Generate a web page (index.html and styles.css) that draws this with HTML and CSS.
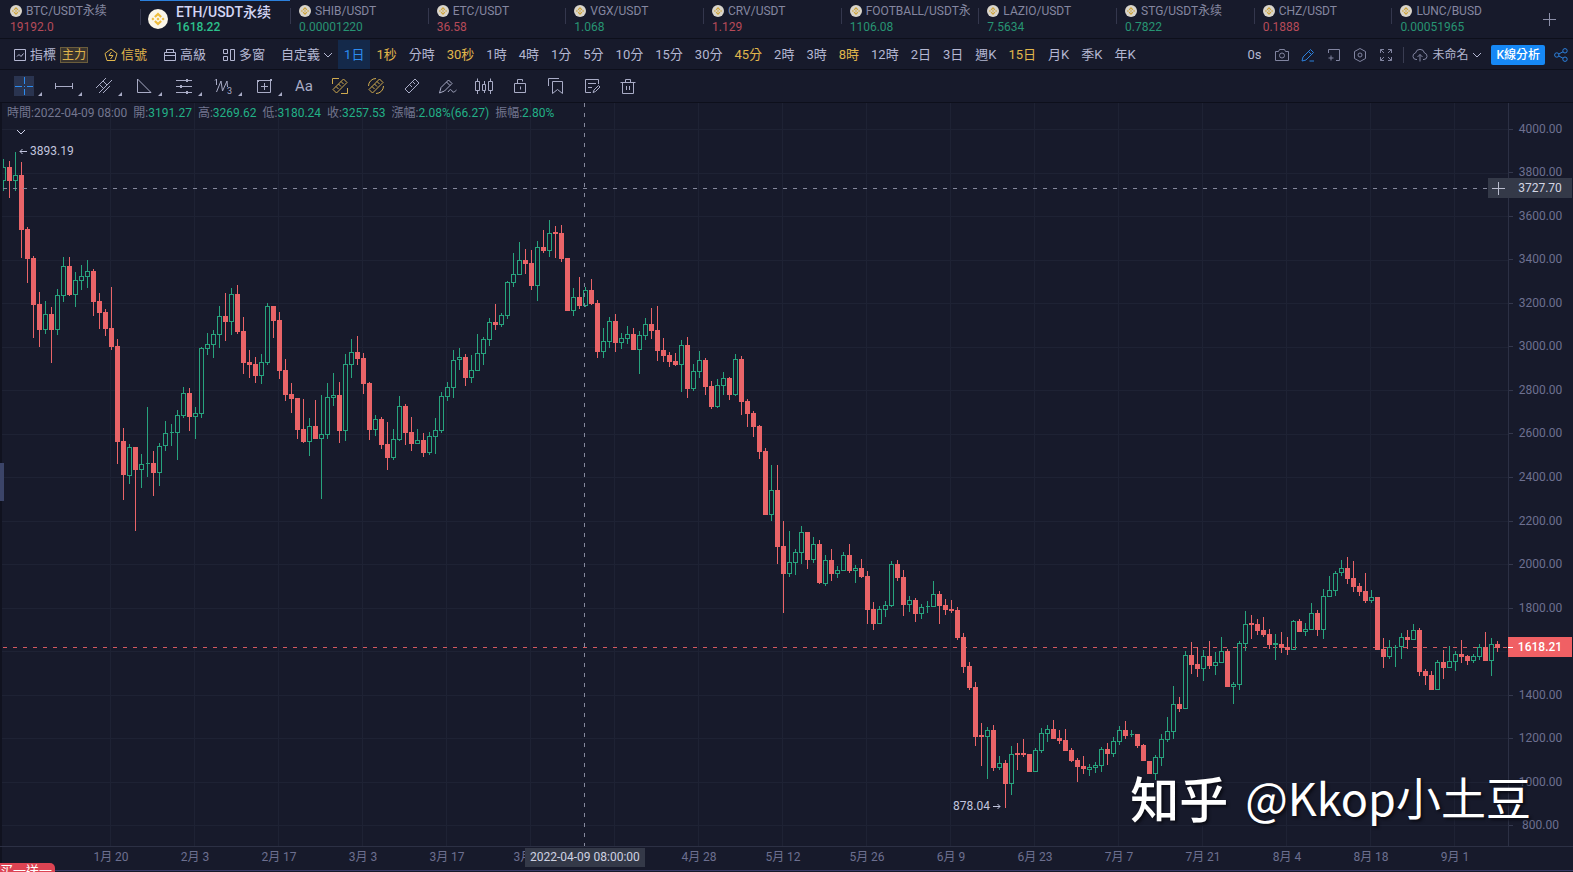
FILE: index.html
```html
<!DOCTYPE html>
<html lang="zh-Hant">
<head>
<meta charset="utf-8">
<title>ETH/USDT永续 1618.22</title>
<link rel="stylesheet" href="styles.css">
</head>
<body>
<svg class="defs" aria-hidden="true">
  <symbol id="coin" viewBox="0 0 20 20"><circle cx="10" cy="10" r="10" fill="#fbf6e8"/><g fill="#eebc3c"><path d="M10 3.4 13.9 7.3 12.4 8.8 10 6.4 7.6 8.8 6.1 7.3Z"/><path d="M10 16.6 6.1 12.7 7.6 11.2 10 13.6 12.4 11.2 13.9 12.7Z"/><path d="M10 8.5 11.5 10 10 11.5 8.500 10ZM4.900 8.500 6.400 10 4.900 11.500 3.400 10ZM15.100 8.500 16.600 10 15.100 11.500 13.600 10Z"/></g></symbol>
  <symbol id="chev" viewBox="0 0 10 6"><path d="M1 1 5 5 9 1"/></symbol>
</svg>
<div class="app">
  <nav class="tabs" id="tabs" aria-label="交易對"></nav>

  <div class="bar">
    <button class="item"><svg class="i14" viewBox="0 0 14 14"><path d="M1.500 1.500h11v11h-11zM4 8.500 6 6.500 8 8.500 10.500 5.500"/></svg>指標<span class="badge">主力</span></button>
    <button class="item gold"><svg class="i14" viewBox="0 0 14 14"><path d="M7 1 13 5.500 11 12.500H3L1 5.500ZM7.500 4 5 7.500h4L6.500 11"/></svg>信號</button>
    <button class="item"><svg class="i14" viewBox="0 0 14 14"><path d="M3.500 4.500v-3h7v3M1.500 4.500h11v8h-11zM1.500 7.500h11"/></svg>高級</button>
    <button class="item"><svg class="i14" viewBox="0 0 14 14"><path d="M1.500 1.500h4v4h-4zM1.500 8.500h4v4h-4zM8.500 1.500h4v11h-4z"/></svg>多窗</button>
    <button class="item custom">自定義<svg class="chev"><use href="#chev"/></svg></button>
    <div class="periods" id="periods"></div>
    <div class="actions">
      <span class="count">0s</span>
      <button class="ico" aria-label="截圖"><svg viewBox="0 0 14 14"><path d="M.500 3.500h3l1-2h5l1 2h3v9H.500z"/><circle cx="7" cy="7.500" r="2.500"/></svg></button>
      <button class="ico blue" aria-label="畫線"><svg viewBox="0 0 14 14"><path d="M1 13 2 9 9.500 1.500 12.500 4.500 5 12ZM7.500 3.500 10.500 6.500M8.500 13H13"/></svg></button>
      <button class="ico" aria-label="新增窗口"><svg viewBox="0 0 14 14"><path d="M1.500 5V1.500h11v11H9M4 7.500v5M1.500 10h5"/></svg></button>
      <button class="ico" aria-label="設定"><svg viewBox="0 0 14 14"><path d="M7 .500 12.500 3.500V10.500L7 13.500 1.500 10.500V3.500Z"/><circle cx="7" cy="7" r="2"/></svg></button>
      <button class="ico" aria-label="全螢幕"><svg viewBox="0 0 14 14"><path d="M1.500 5V1.500H5M1.500 1.500 5 5M9 1.500h3.500V5M12.500 1.500 9 5M1.500 9v3.500H5M1.500 12.500 5 9M9 12.500h3.500V9M12.500 12.500 9 9"/></svg></button>
      <span class="rule"></span>
      <button class="layout"><svg class="cloud" viewBox="0 0 16 14"><path d="M5 11.500H4A3.300 3.300 0 0 1 3.500 5 4.600 4.600 0 0 1 12.500 5 3.300 3.300 0 0 1 12 11.500H11M8 13.500V6.500M5.500 9 8 6.500 10.500 9"/></svg>未命名<svg class="chev"><use href="#chev"/></svg></button>
      <button class="primary">K線分析</button>
      <button class="ico blue share" aria-label="分享"><svg viewBox="0 0 14 14"><circle cx="2.800" cy="7" r="2.200"/><circle cx="11" cy="2.800" r="2.200"/><circle cx="11" cy="11.200" r="2.200"/><path d="M4.800 6 9 3.800M4.800 8 9 10.200"/></svg></button>
    </div>
  </div>

  <div class="tools">
    <button class="tool more on" aria-label="十字線"><svg viewBox="0 0 20 20"><path d="M10.500 1v7M10.500 13v6M1 10.500h7M13 10.500h6M10.500 10v1"/></svg></button>
    <button class="tool more" aria-label="線段"><svg viewBox="0 0 20 20"><path d="M1.500 7v6M18.500 7v6M1.500 10.500h17"/></svg></button>
    <button class="tool more" aria-label="平行線"><svg viewBox="0 0 20 20"><path d="M2 12 12 2M5 17 18 4M9 17 16 10M5 8 10 13M9 5 13 9"/></svg></button>
    <button class="tool more" aria-label="三角形"><svg viewBox="0 0 20 20"><path d="M3.500 3v13.500H17Z"/></svg></button>
    <button class="tool more" aria-label="斐波那契"><svg viewBox="0 0 20 20"><path d="M2 4.500h16M2 10.500h16M2 16.500h16"/><path class="fill" d="M12 3h2v3h-2zM6 9h2v3H6zM12 15h2v3h-2z"/></svg></button>
    <button class="tool more" aria-label="波浪"><svg viewBox="0 0 20 20"><path d="M1 4.500 2.500 3v6M2.500 16 7 5 8.500 15 13 5 13.500 11"/><text x="13" y="18">3</text></svg></button>
    <button class="tool more" aria-label="區間"><svg viewBox="0 0 20 20"><path d="M3.500 4.500h13v12h-13zM10.500 7v7M7 10.500h7"/><path class="fill" d="M3 4h2v2H3zM16 3h2v2h-2z"/></svg></button>
    <button class="tool aa">Aa</button>
    <button class="tool gold" aria-label="量尺"><svg viewBox="0 0 20 20"><path d="M3 13.500 13.500 3 17 6.500 6.500 17ZM6 10.500l2.500 2.500M8.500 8l2.500 2.500M11 5.500l2.500 2.500M2.500 8V2.500H9M17.500 12v5.500H11"/></svg></button>
    <button class="tool gold" aria-label="圓形量尺"><svg viewBox="0 0 20 20"><path d="M3 13.500 13.500 3 17 6.500 6.500 17ZM6 10.500l2.500 2.500M8.500 8l2.500 2.500M11 5.500l2.500 2.500M2.500 10A7.500 7.500 0 0 1 10 2.500M17.500 10A7.500 7.500 0 0 1 10 17.500"/></svg></button>
    <button class="tool" aria-label="尺"><svg viewBox="0 0 20 20"><path d="M3 13 13 3 17 7 7 17ZM8 9l2 2M11 6l2 2"/></svg></button>
    <button class="tool" aria-label="畫筆"><svg viewBox="0 0 20 20"><path d="M1.500 17 3 11.500 10.500 4 14 7.500 6.500 15ZM8.500 6l3.500 3.500M10 16c2-3 3-3 4-1s2.500 1 4.500-1"/></svg></button>
    <button class="tool" aria-label="K線"><svg viewBox="0 0 20 20"><path d="M1.500 5.500h4v9h-4zM3.500 2.500v3M3.500 14.500V18M8.500 8.500h3v6h-3zM10.500 5v3.500M10.500 14.500V17M14.500 5.500h4v9h-4zM16.500 2.500v3M16.500 14.500V18"/></svg></button>
    <button class="tool" aria-label="鎖定"><svg viewBox="0 0 20 20"><path d="M4.500 7.500h11v9h-11zM7.500 7.500v-4h5v2M10.500 10.500v3"/></svg></button>
    <button class="tool" aria-label="收藏"><svg viewBox="0 0 20 20"><path d="M2.500 10V2.500H13M6.500 5.500h10v12l-5-4-5 4z"/></svg></button>
    <button class="tool" aria-label="筆記"><svg viewBox="0 0 20 20"><path d="M16.500 8V3.500h-13v13H9M6 7.500h8M6 11.500h4M11 16.500 12 14 16.500 9.500 18 11 13.500 15.500Z"/></svg></button>
    <button class="tool" aria-label="刪除"><svg viewBox="0 0 20 20"><path d="M2.500 6.500h15M4.500 6.500v11h11v-11M7.500 6.500v-3h5v3M8.500 10v4M11.500 10v4"/></svg></button>
  </div>

  <main class="chart">
    <div class="plot">
      <svg id="plot" viewBox="0 103 1508 743" preserveAspectRatio="none" role="img" aria-label="ETH/USDT 日K"></svg>
      <div class="legend">
        <span>時間:2022-04-09 08:00</span><span>開:<b>3191.27</b></span><span>高:<b>3269.62</b></span><span>低:<b>3180.24</b></span><span>收:<b>3257.53</b></span><span>漲幅:<b>2.08%(66.27)</b></span><span>振幅:<b>2.80%</b></span>
      </div>
      <button class="fold" aria-label="收起"><svg class="chev"><use href="#chev"/></svg></button>
      <div class="mark high"><svg viewBox="0 0 8 8"><path d="M8 4.500H1M3.500 2 1 4.500 3.500 7"/></svg>3893.19</div>
      <div class="mark low">878.04<svg viewBox="0 0 8 8"><path d="M0 4.500H7M4.500 2 7 4.500 4.500 7"/></svg></div>
      <button class="handle" aria-label="展開側欄"></button>
      <button class="plus" aria-label="新增水平線"><svg viewBox="0 0 20 20"><path d="M10.500 4v13M4 10.500h13"/></svg></button>
    </div>
    <div class="prices">
      <div class="scale" id="scale"></div>
      <div class="tag cursor">3727.70</div>
      <div class="tag last">1618.21</div>
    </div>
    <div class="dates">
      <div class="days" id="days"></div>
      <div class="tag day">2022-04-09 08:00:00</div>
    </div>
  </main>
  <a class="promo" href="#">买一送一</a>
  <div class="sign"><strong>知乎</strong><span>@Kkop小土豆</span></div>
</div>
<script src="chart.js"></script>
</body>
</html>
```
FILE: styles.css
```css
* { box-sizing: border-box; }
body {
  margin: 0;
  background: #171a2b;
  color: #b4b7d2;
  font: 13px/20px Roboto, "Noto Sans CJK TC", sans-serif;
  overflow: hidden;
}
button {
  margin: 0; padding: 0; border: 0;
  background: none; color: inherit; font: inherit;
  white-space: nowrap;
}
svg { display: block; fill: none; stroke: currentColor; flex: none; }
.defs { position: absolute; width: 0; height: 0; }
.app {
  position: relative;
  display: flex; flex-direction: column;
  height: 100vh;
  overflow: hidden;
}
.gold { color: #e0b64c; }
.blue { color: #2c80dc; }
.chev { width: 10px; height: 6px; }

.tabs {
  display: flex;
  height: 39px;
  border-bottom: 1px solid #0d0f1b;
  font-family: Roboto, "Noto Sans CJK SC", sans-serif;
}
.tab {
  flex: 1 1 0; min-width: 0;
  display: grid; grid-template: 16px 16px / 12px 1fr;
  column-gap: 4px; align-content: start;
  padding: 3px 8px 0 9px;
  position: relative;
  color: #8587a0;
  font-size: 12px; line-height: 16px; text-align: left;
}
.tab:first-child { flex: none; width: 140px; padding-left: 10px; }
.tab svg { width: 12px; height: 12px; margin-top: 2px; stroke: none; opacity: .85; }
.tab .name { overflow: hidden; white-space: nowrap; }
.tab .quote { grid-column: 1 / -1; }
.tab + .tab::before {
  content: ""; position: absolute; left: 0; top: 8px;
  width: 1px; height: 16px; background: #34374d;
}
.tab .rise { color: #279473; }
.tab .fall { color: #b64a59; }
.tab.active {
  flex: none; width: 150px;
  grid-template-columns: 20px 1fr; column-gap: 8px;
  padding: 3px 0 0 8px;
  border-top: 1px solid #2c80dc;
  color: #d3d6f5; font-size: 14px;
}
.tab.active svg { width: 20px; height: 20px; grid-row: 1 / 3; margin-top: 5px; opacity: 1; }
.tab.active .name { font-weight: 500; }
.tab.active .quote { grid-column: 2; font-size: 12px; font-weight: 500; line-height: 14px; color: #2cc08c; }
.add { width: 40px; margin-right: 4px; color: #8c8fa8; }
.add svg { width: 14px; height: 14px; margin: auto; }

.bar {
  display: flex; align-items: center;
  height: 31px;
  padding: 1px 0 0 13px;
  border-bottom: 1px solid #0d0f1b;
}
.item { display: flex; align-items: center; gap: 3px; margin-right: 16px; }
.i14 { width: 14px; height: 14px; }
.badge {
  margin-left: 1px; padding: 0 1px;
  border: 1px solid #6b5d3c; background: #39342f; color: #e0b64c;
  font-size: 12px; line-height: 14px;
}
.custom { margin-right: 5px; }
.periods { display: flex; align-self: stretch; }
.period { padding: 0 6px; }
.period.active { background: #14294a; color: #2c8cf0; }
.actions { display: flex; align-items: center; margin-left: auto; gap: 12px; padding-right: 5px; }
.count { margin-right: 2px; }
.ico { color: #8184a0; }
.ico.blue { color: #2c80dc; }
.ico svg { width: 14px; height: 14px; }
.rule { width: 1px; height: 16px; margin: 0 -4px 0 -2px; background: #3a3d52; }
.layout { display: flex; align-items: center; gap: 4px; font-size: 12px; }
.cloud { width: 16px; height: 14px; color: #8184a0; }
.primary {
  padding: 0 5px; margin: 0 -3px;
  border-radius: 2px; background: #1688f5; color: #fff;
  font-size: 12px; line-height: 20px; font-weight: 500;
}

.tools {
  display: flex; align-items: center;
  height: 33px;
  padding-left: 14px;
  border-bottom: 1px solid #0d0f1b;
  color: #a9acc6;
}
.tool { position: relative; width: 20px; height: 20px; margin-right: 16px; }
.tool.more { margin-right: 20px; }
.tool.on { background: #2a3450; color: #2c8cf0; }
.tool.more::after {
  content: ""; position: absolute; right: -8px; bottom: 0;
  border: 2px solid; border-color: transparent #a9acc6 #a9acc6 transparent;
}
.tool svg { width: 20px; height: 20px; }
.tool.gold { color: #d0ab4f; }
.tool text { font-size: 9px; fill: currentColor; stroke: none; }
.fill { fill: currentColor; stroke: none; }
.aa { font-size: 15px; }

.chart {
  flex: 1; min-height: 0;
  display: grid;
  grid-template: minmax(0, 1fr) 23px / minmax(0, 1fr) 65px;
  border-bottom: 1px solid #383a66;
  margin-bottom: 1px;
}
.plot { position: relative; border-bottom: 1px solid #2c3044; box-shadow: inset 2px 0 #10121f; }
.plot > svg { position: absolute; width: 100%; height: 100%; shape-rendering: crispEdges; }
.grid { stroke: #1e2234; }
.up { stroke: #27a37d; }
.down { stroke: #e96468; fill: #e96468; }
.aim { stroke: #85889c; stroke-dasharray: 4 6; }
.now { stroke: #d45a62; stroke-dasharray: 4 6; }
.legend {
  position: absolute; left: 7px; top: 2px;
  display: flex; gap: 6px;
  color: #73768f; font-size: 12px; line-height: 16px; white-space: nowrap;
}
.legend b { color: #22b187; font-weight: 400; }
.fold { position: absolute; left: 16px; top: 26px; color: #d0d3ea; }
.mark {
  position: absolute;
  display: flex; align-items: center; gap: 3px;
  color: #c2c5de; font-size: 12px; line-height: 16px;
}
.mark svg { width: 8px; height: 8px; }
.high { left: 19px; top: 5.400%; }
.low { left: 63.200%; top: 93.600%; }
.handle { position: absolute; left: 0; top: 48.500%; width: 4px; height: 38px; background: #3b4468; }
.plus { position: absolute; right: 0; top: 10.100%; width: 20px; height: 20px; background: #343948; color: #b9bccd; }
.plus svg { width: 20px; height: 20px; }

.prices {
  position: relative;
  border-left: 1px solid #2c3044; border-bottom: 1px solid #2c3044;
  color: #6d7090; font-size: 12px;
}
.scale { display: flex; flex-direction: column; height: calc(100% + 1px); padding-top: 4px; }
.scale span { flex: 1; display: flex; align-items: center; justify-content: center; position: relative; padding-right: 1px; }
.scale span::before { content: ""; position: absolute; left: 0; top: 50%; width: 4px; height: 1px; background: #34384d; }
.tag { position: absolute; text-align: center; font-size: 12px; line-height: 20px; }
.cursor { left: -1px; right: 1px; top: 10.100%; background: #343948; color: #d2d5e3; }
.last { left: -1px; right: 1px; top: 71.900%; background: #f06064; color: #fff; font-weight: 500; }
.last::before { content: ""; position: absolute; left: 0; top: 10px; width: 5px; height: 1px; background: #fff; }
.dates { position: relative; color: #6d7090; font-size: 12px; box-shadow: inset 2px 0 #10121f; }
.days { display: flex; padding: 0 11px 0 69px; }
.days span { flex: 1; text-align: center; }
.day { left: 525px; top: 1px; padding: 0 5px; line-height: 19px; background: #343948; color: #cfd2e2; }
.promo {
  position: absolute; left: 0; bottom: 0;
  height: 9px; width: 55px; overflow: hidden;
  border-radius: 0 5px 0 0; background: #dd4453; color: #fff;
  font: 13px/14px "Noto Sans CJK SC", sans-serif; text-decoration: none; white-space: nowrap;
}
.sign {
  position: absolute; right: 42px; bottom: 43px;
  display: flex; align-items: center; gap: 17px;
  color: #fff; font: 45px/64px "Noto Sans CJK SC", sans-serif;
  text-shadow: 2px 2px 3px #0a0b14;
  pointer-events: none;
}
.sign strong { font-size: 49px; font-weight: 500; }
```
FILE: chart.js
```js
const coin = '<svg><use href="#coin"/></svg>';
const pairs = [
  ['BTC/USDT永续', '19192.0', 'fall'], ['ETH/USDT永续', '1618.22', 'rise'],
  ['SHIB/USDT', '0.00001220', 'rise'], ['ETC/USDT', '36.58', 'fall'],
  ['VGX/USDT', '1.068', 'rise'], ['CRV/USDT', '1.129', 'fall'],
  ['FOOTBALL/USDT永', '1106.08', 'rise'], ['LAZIO/USDT', '7.5634', 'rise'],
  ['STG/USDT永续', '0.7822', 'rise'], ['CHZ/USDT', '0.1888', 'fall'],
  ['LUNC/BUSD', '0.00051965', 'rise']
];
document.getElementById('tabs').innerHTML = pairs.map(([n, q, c], i) =>
  `<button class="tab${i === 1 ? ' active' : ''}">${coin}<span class="name">${n}</span><span class="quote ${c}">${q}</span></button>`
).join('') + '<button class="add" aria-label="新增"><svg viewBox="0 0 14 14"><path d="M7.500 1v13M1 7.500h13"/></svg></button>';

const gold = ['1秒', '30秒', '45分', '8時', '15日'];
document.getElementById('periods').innerHTML =
  '1日 1秒 分時 30秒 1時 4時 1分 5分 10分 15分 30分 45分 2時 3時 8時 12時 2日 3日 週K 15日 月K 季K 年K'
    .split(' ').map((p, i) => `<button class="period${i ? '' : ' active'}${gold.includes(p) ? ' gold' : ''}">${p}</button>`).join('');

let scale = '';
for (let p = 4000; p >= 800; p -= 200) scale += `<span>${p === 1600 ? '' : p + '.00'}</span>`;
document.getElementById('scale').innerHTML = scale;
document.getElementById('days').innerHTML =
  ['1月 20', '2月 3', '2月 17', '3月 3', '3月 17', '3月 31', '', '4月 28', '5月 12', '5月 26', '6月 9', '6月 23', '7月 7', '7月 21', '8月 4', '8月 18', '9月 1']
    .map(d => `<span>${d}</span>`).join('');

// One candle per entry: direction, then high, body top, body bottom, low on the plot's vertical scale.
const candles = `
u159,167,181,191 d161,167,181,198 u152,175,181,191 d162,175,230,258 d227,229,259,283 d256,258,305,338 d292,304,330,347 u301,314,330,334 d307,314,330,363 u289,295,330,335
u257,266,296,302 d257,266,295,296 u272,280,295,307 u265,276,281,290 u260,271,277,288 d269,271,302,316 d293,301,313,329 d309,312,329,336 d287,328,347,350 d339,346,442,464
d428,441,475,500 u444,447,476,484 d447,447,470,531 u454,464,470,488 u407,463,464,477 d451,463,473,496 u443,446,473,486 u421,433,446,451 u424,432,433,446 u410,415,433,460
u387,393,416,418 d388,393,417,431 u407,413,417,439 u347,348,414,418 u333,344,349,355 u330,334,345,358 u306,316,335,348 d293,316,322,341 u288,294,322,335 d285,294,332,334
d317,331,363,374 d350,362,365,378 d357,364,376,383 u354,362,376,384 u303,306,363,365 d306,306,321,338 d312,320,371,379 d359,370,395,401 d383,394,399,413 d398,398,430,439
d399,429,442,443 u418,426,442,456 d400,426,439,439 u395,434,439,499 u383,397,435,439 u373,395,398,406 d382,395,431,443 u354,364,431,441 u339,352,365,378 d336,352,359,365
d353,358,384,394 d382,383,430,440 u415,419,430,436 d417,419,445,449 d422,444,458,470 u429,439,458,460 u396,406,440,441 d404,406,433,445 d417,432,444,451 u429,440,444,444
d433,440,453,457 u432,436,453,455 u418,430,437,454 u392,396,431,433 u382,387,397,401 u350,360,388,398 u348,357,360,370 d354,357,378,386 u355,370,378,383 u334,353,371,371
u337,339,354,365 u318,322,340,346 d304,322,325,330 u313,315,325,327 u281,282,316,319 u253,274,283,287 u242,260,275,275 d249,260,264,274 d250,263,286,290 u241,247,286,301
d230,247,251,253 u220,233,251,257 d226,232,234,258 d225,233,259,262 d258,258,311,311 u288,297,311,316 d277,297,306,309 u287,290,306,307 d279,290,304,305 d300,303,352,358
u328,341,352,358 u317,321,342,348 d314,321,343,352 u333,338,343,349 u326,334,339,344 d328,334,350,350 u331,335,350,374 u318,324,336,340 d308,324,331,339 d306,330,351,361
d338,350,356,362 d352,355,362,367 d353,361,365,366 u340,345,365,392 d337,345,389,398 u364,371,389,391 u351,360,372,378 d358,360,387,395 d381,386,407,409 u379,385,407,408
u372,378,386,395 d377,378,395,400 u354,359,395,396 d356,359,402,415 d399,401,414,427 d411,413,427,437 d425,426,452,459 d448,451,515,515 u465,490,515,521 d465,490,547,564
d521,546,574,613 u531,562,574,577 u549,552,563,575 u526,532,553,564 d532,532,560,569 u537,544,560,563 d540,544,583,584 u555,560,584,586 d549,560,574,581 u566,570,574,578
u552,555,571,571 d544,555,571,573 u565,568,571,583 d559,568,577,578 d571,576,610,624 d602,609,624,630 u606,609,624,624 u601,605,610,617 u561,564,606,607 d560,564,578,581
d570,577,605,616 u596,600,605,612 d598,600,614,622 u604,607,614,619 u601,606,607,613 u581,594,607,607 d591,594,606,624 d599,605,610,615 d600,609,611,613 d607,610,638,640
d633,637,667,673 d662,666,688,690 d682,687,737,746 d723,735,737,766 u727,730,737,779 d725,730,768,771 u756,763,768,770 d760,763,784,808 u746,754,784,795 d743,753,755,770
d739,753,755,757 d754,754,772,772 u748,750,772,772 u728,733,751,753 u725,729,734,742 d720,729,739,739 d730,738,741,744 d729,740,751,751 d748,750,761,762 d758,760,767,782
d756,766,769,774 u764,767,770,776 u762,765,768,773 u747,749,766,772 d743,749,754,765 u737,741,754,757 u726,730,742,745 d721,730,736,739 u730,734,735,737 d734,734,746,748
d744,745,761,761 d761,761,774,774 u755,757,774,780 u734,739,758,766 u717,731,740,742 u686,704,732,739 d697,704,709,712 u651,655,709,709 d642,655,665,674 d647,664,669,677
u650,656,669,681 d641,656,666,669 u652,662,666,675 u637,651,663,663 d649,651,687,687 u682,684,687,704 u641,643,685,690 u611,624,644,651 d615,623,625,639 d619,624,631,635
d617,630,635,637 d629,634,645,649 u634,643,645,660 d632,644,648,653 d637,647,650,655 u620,621,650,650 d619,621,632,632 u623,629,632,636 u603,613,630,630 d610,613,630,636
u589,596,630,639 u576,590,597,597 u571,573,591,596 u560,568,573,576 d557,568,579,584 d561,578,587,592 d583,586,592,596 d573,591,601,603 u590,597,601,603 d597,597,650,650
d638,649,657,668 u640,647,657,659 u645,647,648,667 u633,637,647,659 d630,637,640,649 u624,630,640,640 d628,630,672,676 d669,671,676,685 d671,675,690,690 u660,662,690,690
d650,662,668,679 u646,661,668,668 u651,654,662,671 d640,654,657,663 d655,656,661,665 u654,656,661,663 u644,647,657,660 d632,647,661,661 u638,644,661,676 d641,644,648,652`
  .trim().split(/\s+/);

let out = '<clipPath id="area"><rect x="3" y="103" width="1505" height="743"/></clipPath>';
for (let i = 0; i < 17; i++) {
  out += `<path class="grid" d="M2 ${129.5 + 43.5 * i}H1508M${110.5 + 84 * i} 103V846"/>`;
}
out += '<path class="now" d="M3 647.5H1508"/><g clip-path="url(#area)">';
candles.forEach((c, i) => {
  const [high, top, bottom, low] = c.slice(1).split(',').map(Number);
  const x = 3.5 + i * 6;
  const end = Math.max(bottom - 0.5, top + 0.5);
  out += `<path class="${c[0] === 'u' ? 'up' : 'down'}" d="M${x} ${high}V${top}M${x} ${end}V${Math.max(low, end)}M${x - 2} ${top + 0.5}h4V${end}h-4z"/>`;
});
out += '</g><path class="aim" d="M3 188.5H1488M584.5 103V846"/>';
document.getElementById('plot').innerHTML = out;
```
